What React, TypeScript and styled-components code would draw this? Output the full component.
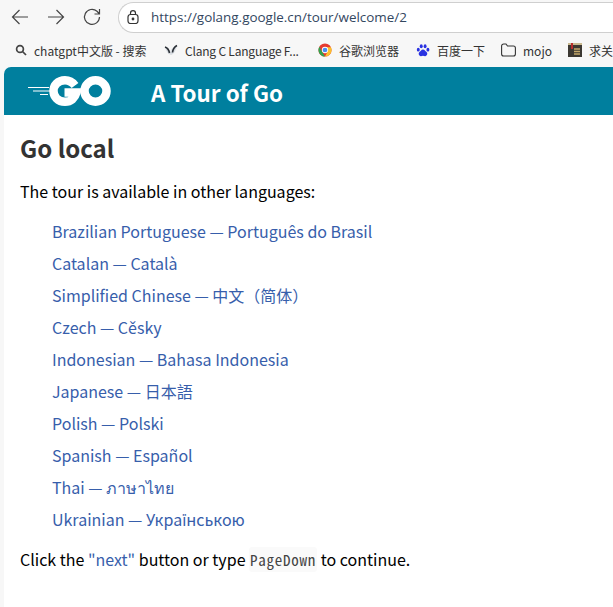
import React from "react";
import styled, { createGlobalStyle } from "styled-components";

const Global = createGlobalStyle`
  html, body { margin: 0; padding: 0; background: #fff; }
  body { width: 613px; height: 607px; overflow: hidden; font-family: "Noto Sans CJK SC", "Noto Sans", sans-serif; }
`;
const Shell = styled.div`width: 613px; height: 607px; display: flex; flex-direction: column; overflow: hidden; background: #f7f7f7;`;
const Toolbar = styled.div`height: 33px; flex: none; display: flex; align-items: center; background: #f7f7f7; padding: 1px 0 0 11px; box-sizing: border-box;`;
const NavIcon = styled.svg`width: 18px; height: 18px; flex: none; margin-right: 18px; stroke: #454545; stroke-width: 1.2; fill: none;`;
const Address = styled.div`flex: none; margin-left: -1px; width: 520px; height: 31px; box-sizing: border-box; border: 1px solid #cfcfcf; border-right: 0; border-radius: 16px 0 0 16px; background: #fff; display: flex; align-items: center; padding-left: 8px; gap: 12px; font: 13.45px "Open Sans", sans-serif; color: #33475f;`;
const Bookmarks = styled.div`height: 34px; flex: none; display: flex; align-items: center; padding-left: 15px; background: #f7f7f7; font: 12px "Noto Sans CJK SC", sans-serif; color: #333; white-space: nowrap;`;
const Bookmark = styled.span<{ $w: number; $tight?: boolean }>`display: flex; align-items: center; gap: 7px; flex: none; width: ${p => p.$w}px; letter-spacing: ${p => (p.$tight ? "-0.2px" : "0")};`;
const Page = styled.div`flex: 1; margin-left: 4px; background: #fff; border-radius: 7px 0 0 0; overflow: hidden;`;
const Header = styled.header`height: 48px; background: #007f9e; display: flex; align-items: center; padding-left: 24px;`;
const Title = styled.div`margin-left: 40px; padding-top: 3px; color: #fff; font-size: 22.4px; font-weight: 700; line-height: 45px;`;
const Content = styled.main`padding: 16px 16px 0 16px; font-size: 16px; line-height: 32px; color: #000;`;
const Heading = styled.h2`margin: 0 0 10px; color: #333; font-size: 24px; font-weight: 700; line-height: 34px;`;
const Para = styled.p`margin: 0;`;
const List = styled.ul`margin: 8px 0 8px; padding: 0 0 0 32px; list-style: none;`;
const Item = styled.li`height: 32px;`;
const Link = styled.a`color: #375eab; text-decoration: none;`;
const Code = styled.code`font: 400 15px "Noto Sans Mono CJK SC", "DejaVu Sans Mono", monospace; letter-spacing: 0.75px; background: #fafafa; border-radius: 3px; padding: 2px 1px; color: #444;`;

const links = [
  "Brazilian Portuguese — Português do Brasil",
  "Catalan — Català",
  "Simplified Chinese — 中文（简体）",
  "Czech — Cěsky",
  "Indonesian — Bahasa Indonesia",
  "Japanese — 日本語",
  "Polish — Polski",
  "Spanish — Español",
  "Thai — ภาษาไทย",
  "Ukrainian — Українською",
];

const Search = () => (
  <svg width="12" height="12" viewBox="0 0 12 12" fill="none" stroke="#444" strokeWidth="1.7"><circle cx="5" cy="5" r="3.4" /><path d="M7.500 7.500 11 11" /></svg>
);
const Bird = () => (
  <svg width="14" height="13" viewBox="0 0 14 13" fill="none"><path d="M1 3c3 0 4 2 5 5 1-3 3-5 7-6-1 4-3 8-6 9C4 10 2 7 1 3Z" fill="#d9dde2" /><path d="M1 3c3 1 4 3 4.500 6M13 1.500c-2 1-4 3-4.500 7" stroke="#2a2f36" strokeWidth="1.6" /></svg>
);
const Chrome = () => (
  <svg width="14" height="14" viewBox="0 0 16 16"><circle cx="8" cy="8" r="7.500" fill="#e53b30" /><path d="M1.500 4.300 5 10.500l3 5A7.500 7.500 0 0 1 1.500 4.300Z" fill="#2ea44f" /><path d="M8 4.800h6.800a7.500 7.500 0 0 1-6.800 10.700l3.200-6Z" fill="#fbc02d" /><circle cx="8" cy="8" r="3.6" fill="#fff" /><circle cx="8" cy="8" r="2.7" fill="#4a8cf0" /></svg>
);
const Paw = () => (
  <svg width="14" height="15" viewBox="0 0 16 16" fill="#2932e1"><ellipse cx="2.600" cy="7" rx="1.700" ry="2.200" /><ellipse cx="6" cy="3.200" rx="1.700" ry="2.300" /><ellipse cx="10.400" cy="3.200" rx="1.700" ry="2.300" /><ellipse cx="13.600" cy="7" rx="1.700" ry="2.200" /><path d="M8 6.800c2 0 2.500 2 4 3 1.600 1.200 1 4.700-1.600 4.700-1 0-1.500-.4-2.400-.4s-1.400.4-2.400.4C3 14.500 2.400 11 4 9.800c1.500-1 2-3 4-3Z" /></svg>
);
const Folder = () => (
  <svg width="15" height="14" viewBox="0 0 15 14" fill="none" stroke="#333" strokeWidth="1.1"><path d="M.6 3a2 2 0 0 1 2-2h2.400l1.500 2h5.900a2 2 0 0 1 2 2v6a2 2 0 0 1-2 2H2.600a2 2 0 0 1-2-2Z" /></svg>
);
const Book = () => (
  <svg width="14" height="14" viewBox="0 0 14 14"><rect width="14" height="14" fill="#3c3832" /><rect x="0" y="0" width="14" height="2" fill="#c9b98f" /><rect x="3" y="0" width="2" height="6" fill="#b72c2c" /><path d="M6 6h6M6 8.500h6M6 11h6" stroke="#c3a76a" strokeWidth="1.3" /></svg>
);
const GoLogo = () => (
  <svg width="83" height="30" viewBox="0 0 83 30" fill="none">
    <path d="M0 11.500h21M5 15h17M12 18.500h8" stroke="#fff" strokeWidth="1.2" />
    <path d="M47 9.500C44.500 6.200 41 4.300 37 4.300 29.800 4.300 25.500 9.500 25.500 15S29.800 25.700 37 25.700c6 0 10-3.700 11.500-9.200H36.500" stroke="#fff" strokeWidth="8.500" />
    <ellipse cx="67.500" cy="15" rx="11" ry="10.700" stroke="#fff" strokeWidth="8.500" />
  </svg>
);

export default function App() {
  return (
    <Shell>
      <Global />
      <Toolbar>
        <NavIcon viewBox="0 0 18 18"><path d="M17 9H1.500M8.500 2 1.500 9l7 7" /></NavIcon>
        <NavIcon viewBox="0 0 18 18"><path d="M1 9h15.500M9.500 2l7 7-7 7" /></NavIcon>
        <NavIcon viewBox="0 0 18 18"><path d="M16.500 9A7.500 7.500 0 1 1 14 3.300L16.500 6M16.500 1v5h-5" /></NavIcon>
        <Address>
          <svg width="12" height="14" viewBox="0 0 12 14" fill="none" stroke="#333" strokeWidth="1.2"><rect x="1" y="4.500" width="10" height="9" rx="2.500" /><path d="M3.500 4.500V3.200a2.500 2.500 0 0 1 5 0v1.300" /><circle cx="6" cy="9" r=".8" fill="#333" /></svg>
          <span>https://golang.google.cn/tour/welcome/2</span>
        </Address>
      </Toolbar>
      <Bookmarks>
        <Bookmark $w={149}><Search /><span>chatgpt中文版 - 搜索</span></Bookmark>
        <Bookmark $w={154} $tight><Bird /><span>Clang C Language F...</span></Bookmark>
        <Bookmark $w={98}><Chrome /><span>谷歌浏览器</span></Bookmark>
        <Bookmark $w={85}><Paw /><span>百度一下</span></Bookmark>
        <Bookmark $w={67}><Folder /><span>mojo</span></Bookmark>
        <Bookmark $w={62}><Book /><span>求关</span></Bookmark>
      </Bookmarks>
      <Page>
        <Header><GoLogo /><Title>A Tour of Go</Title></Header>
        <Content>
          <Heading>Go local</Heading>
          <Para>The tour is available in other languages:</Para>
          <List>{links.map(l => <Item key={l}><Link>{l}</Link></Item>)}</List>
          <Para>Click the <Link>"next"</Link> button or type <Code>PageDown</Code> to continue.</Para>
        </Content>
      </Page>
    </Shell>
  );
}
